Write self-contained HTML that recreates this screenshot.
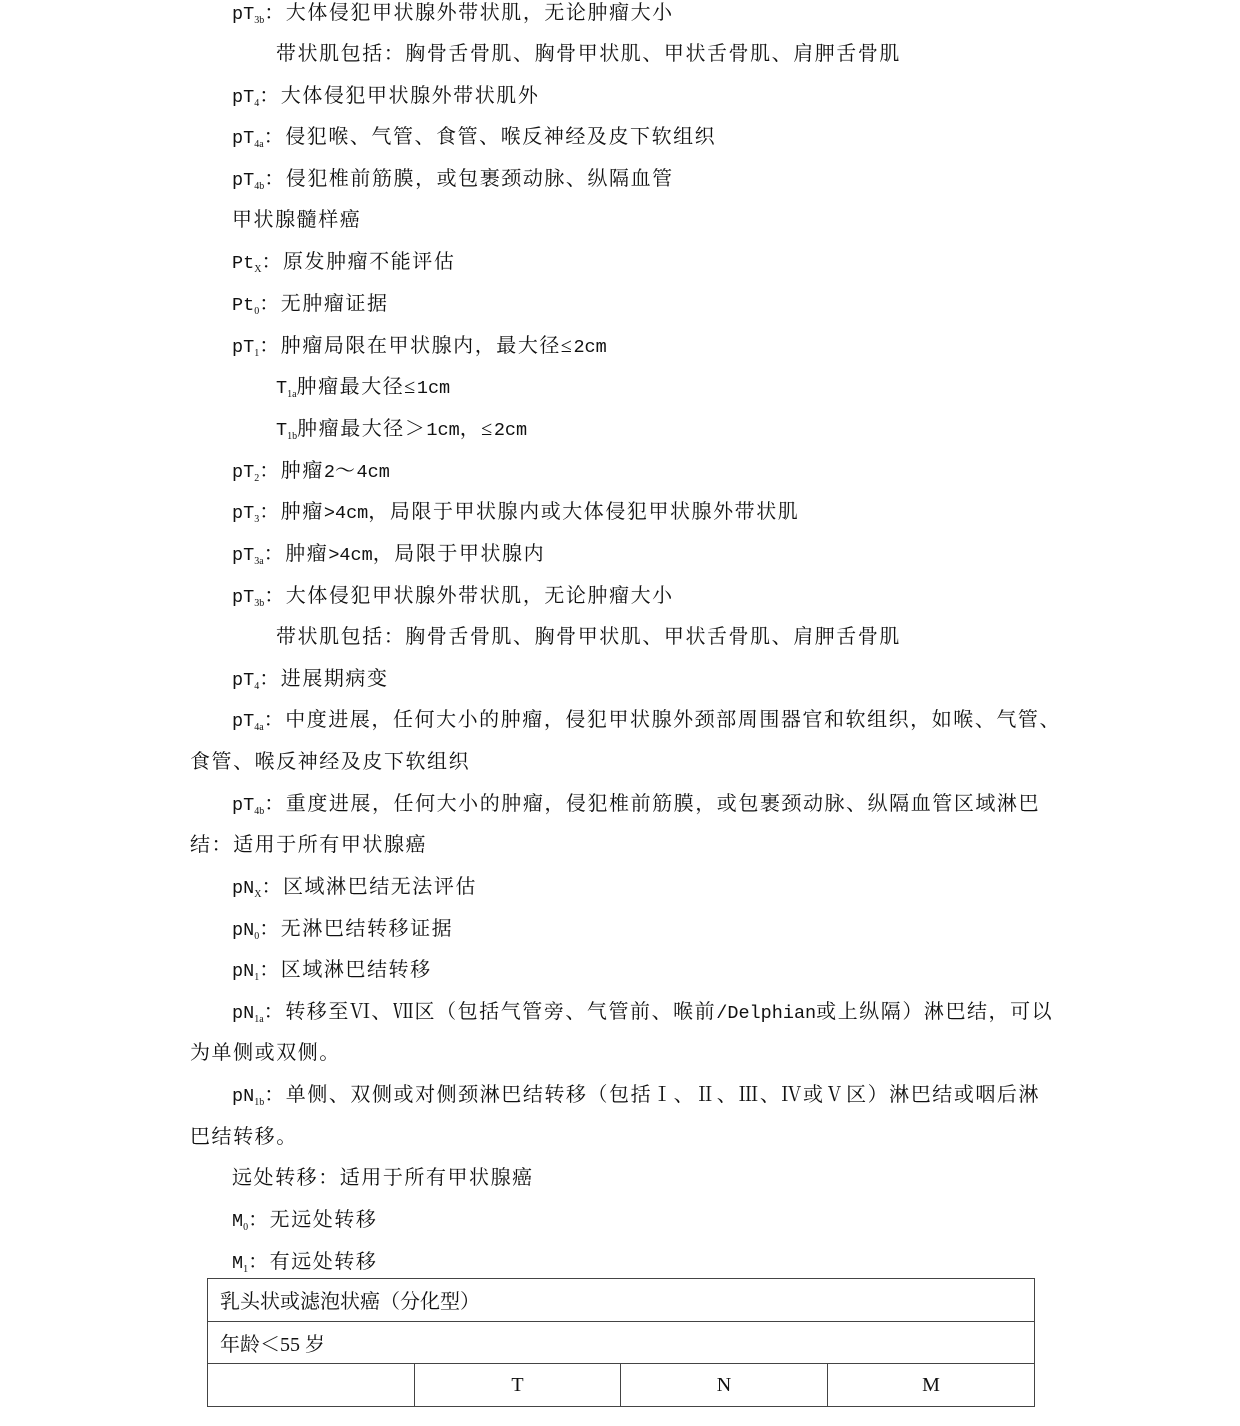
<!DOCTYPE html>
<html><head><meta charset="utf-8"><style>
body{margin:0;width:1240px;height:1426px;background:#fff;position:relative;overflow:hidden;font-family:"Liberation Serif","Noto Serif CJK SC",serif;color:#111;}
.l{position:absolute;white-space:nowrap;font-size:20px;line-height:24px;letter-spacing:1.55px;}
sub{font-size:10px;vertical-align:-4px;letter-spacing:0;}
.m{font-family:"Liberation Mono","Noto Serif CJK SC",monospace;letter-spacing:0;font-size:18.5px;}
table{position:absolute;left:207px;top:1278px;width:827px;border-collapse:collapse;font-size:20px;table-layout:fixed;}
td{border:1.5px solid #444;height:42.7px;padding:0 0 0 12px;font-family:"Liberation Serif","Noto Serif CJK SC",serif;box-sizing:border-box;}
</style></head><body>
<div class="l" style="left:232px;top:1px"><span class="m">pT</span><sub>3b</sub>：大体侵犯甲状腺外带状肌，无论肿瘤大小</div>
<div class="l" style="left:276px;top:42px">带状肌包括：胸骨舌骨肌、胸骨甲状肌、甲状舌骨肌、肩胛舌骨肌</div>
<div class="l" style="left:232px;top:84px"><span class="m">pT</span><sub>4</sub>：大体侵犯甲状腺外带状肌外</div>
<div class="l" style="left:232px;top:125px"><span class="m">pT</span><sub>4a</sub>：侵犯喉、气管、食管、喉反神经及皮下软组织</div>
<div class="l" style="left:232px;top:167px"><span class="m">pT</span><sub>4b</sub>：侵犯椎前筋膜，或包裹颈动脉、纵隔血管</div>
<div class="l" style="left:232px;top:208px">甲状腺髓样癌</div>
<div class="l" style="left:232px;top:250px"><span class="m">Pt</span><sub>X</sub>：原发肿瘤不能评估</div>
<div class="l" style="left:232px;top:292px"><span class="m">Pt</span><sub>0</sub>：无肿瘤证据</div>
<div class="l" style="left:232px;top:334px"><span class="m">pT</span><sub>1</sub>：肿瘤局限在甲状腺内，最大径≤<span class="m">2cm</span></div>
<div class="l" style="left:276px;top:375px"><span class="m">T</span><sub>1a</sub>肿瘤最大径≤<span class="m">1cm</span></div>
<div class="l" style="left:276px;top:417px"><span class="m">T</span><sub>1b</sub>肿瘤最大径＞<span class="m">1cm</span>，≤<span class="m">2cm</span></div>
<div class="l" style="left:232px;top:459px"><span class="m">pT</span><sub>2</sub>：肿瘤<span class="m">2</span>～<span class="m">4cm</span></div>
<div class="l" style="left:232px;top:500px"><span class="m">pT</span><sub>3</sub>：肿瘤<span class="m">&gt;4cm</span>，局限于甲状腺内或大体侵犯甲状腺外带状肌</div>
<div class="l" style="left:232px;top:542px"><span class="m">pT</span><sub>3a</sub>：肿瘤<span class="m">&gt;4cm</span>，局限于甲状腺内</div>
<div class="l" style="left:232px;top:584px"><span class="m">pT</span><sub>3b</sub>：大体侵犯甲状腺外带状肌，无论肿瘤大小</div>
<div class="l" style="left:276px;top:625px">带状肌包括：胸骨舌骨肌、胸骨甲状肌、甲状舌骨肌、肩胛舌骨肌</div>
<div class="l" style="left:232px;top:667px"><span class="m">pT</span><sub>4</sub>：进展期病变</div>
<div class="l" style="left:232px;top:708px"><span class="m">pT</span><sub>4a</sub>：中度进展，任何大小的肿瘤，侵犯甲状腺外颈部周围器官和软组织，如喉、气管、</div>
<div class="l" style="left:190px;top:750px">食管、喉反神经及皮下软组织</div>
<div class="l" style="left:232px;top:792px"><span class="m">pT</span><sub>4b</sub>：重度进展，任何大小的肿瘤，侵犯椎前筋膜，或包裹颈动脉、纵隔血管区域淋巴</div>
<div class="l" style="left:190px;top:833px">结：适用于所有甲状腺癌</div>
<div class="l" style="left:232px;top:875px"><span class="m">pN</span><sub>X</sub>：区域淋巴结无法评估</div>
<div class="l" style="left:232px;top:917px"><span class="m">pN</span><sub>0</sub>：无淋巴结转移证据</div>
<div class="l" style="left:232px;top:958px"><span class="m">pN</span><sub>1</sub>：区域淋巴结转移</div>
<div class="l" style="left:232px;top:1000px"><span class="m">pN</span><sub>1a</sub>：转移至Ⅵ、Ⅶ区（包括气管旁、气管前、喉前<span class="m">/Delphian</span>或上纵隔）淋巴结，可以</div>
<div class="l" style="left:190px;top:1041px">为单侧或双侧。</div>
<div class="l" style="left:232px;top:1083px"><span class="m">pN</span><sub>1b</sub>：单侧、双侧或对侧颈淋巴结转移（包括Ⅰ、Ⅱ、Ⅲ、Ⅳ或Ⅴ区）淋巴结或咽后淋</div>
<div class="l" style="left:190px;top:1125px">巴结转移。</div>
<div class="l" style="left:232px;top:1166px">远处转移：适用于所有甲状腺癌</div>
<div class="l" style="left:232px;top:1208px"><span class="m">M</span><sub>0</sub>：无远处转移</div>
<div class="l" style="left:232px;top:1250px"><span class="m">M</span><sub>1</sub>：有远处转移</div>
<table>
<colgroup><col style="width:207px"><col style="width:206px"><col style="width:207px"><col style="width:207px"></colgroup>
<tr><td colspan="4">乳头状或滤泡状癌（分化型）</td></tr>
<tr><td colspan="4">年龄＜55 岁</td></tr>
<tr><td></td><td style="text-align:center;padding:0">T</td><td style="text-align:center;padding:0">N</td><td style="text-align:center;padding:0">M</td></tr>
</table>
</body></html>
